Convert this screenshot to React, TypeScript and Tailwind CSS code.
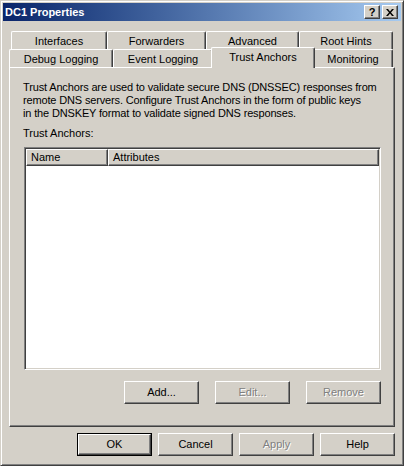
const font = "font-['Liberation_Sans',Arial,sans-serif]";

function Tab({ label, w, selected }: { label: string; w: string; selected?: boolean }) {
  if (selected) {
    return (
      <div
        className={`${w} relative z-10 -mx-[2px] -mt-[2px] h-[21px] -mb-px flex items-start justify-center pt-[3px] border-t border-l border-white border-r border-r-[#404040] rounded-tl-[2px] rounded-tr-[2px] bg-[#d4d0c8] shadow-[inset_-1px_0_#808080]`}
      >
        {label}
      </div>
    );
  }
  return (
    <div
      className={`${w} h-[18px] flex items-center justify-center pt-[2px] border-t border-l border-white border-r border-r-[#404040] rounded-tl-[2px] rounded-tr-[2px] bg-[#d4d0c8] shadow-[inset_-1px_0_#808080]`}
    >
      {label}
    </div>
  );
}

function Btn({ label, disabled, isDefault }: { label: string; disabled?: boolean; isDefault?: boolean }) {
  const face = (
    <div
      className={`flex-1 flex items-center justify-center border-t border-l border-white border-r border-b border-r-[#404040] border-b-[#404040] shadow-[inset_-1px_-1px_#808080] ${
        disabled ? "text-[#808080] [text-shadow:1px_1px_0_#fff]" : "text-black"
      }`}
    >
      {label}
    </div>
  );
  if (isDefault) {
    return <div className="w-[75px] h-[23px] flex border border-black">{face}</div>;
  }
  return <div className="w-[75px] h-[23px] flex">{face}</div>;
}

export default function App() {
  return (
    <div
      className={`${font} w-[404px] h-[466px] flex flex-col p-[2px] bg-[#d4d0c8] text-[11px] leading-[13px] text-black border border-t-[#d4d0c8] border-l-[#d4d0c8] border-r-[#404040] border-b-[#404040] shadow-[inset_1px_1px_#fff,inset_-1px_-1px_#808080]`}
    >
      {/* title bar */}
      <div className="h-[18px] flex items-center justify-between bg-gradient-to-r from-[#0a246a] to-[#a6caf0] pl-[2px] pr-[3px]">
        <span className="text-white font-bold text-[11px]">DC1 Properties</span>
        <div className="flex gap-[2px]">
          <div className="w-[16px] h-[14px] flex items-center justify-center bg-[#d4d0c8] border-t border-l border-white border-r border-b border-r-[#404040] border-b-[#404040] shadow-[inset_-1px_-1px_#808080] font-bold text-[11px] leading-none">
            ?
          </div>
          <div className="w-[16px] h-[14px] flex items-center justify-center bg-[#d4d0c8] border-t border-l border-white border-r border-b border-r-[#404040] border-b-[#404040] shadow-[inset_-1px_-1px_#808080]">
            <svg width="8" height="7" viewBox="0 0 8 7">
              <path d="M0 0h2l2 2.5L6 0h2L5 3.5 8 7H6L4 4.5 2 7H0l3-3.5z" fill="#000" />
            </svg>
          </div>
        </div>
      </div>

      <div className="flex flex-col px-[6px] pt-[10px]">
        {/* tabs */}
        <div className="flex pl-[2px]">
          <Tab label="Interfaces" w="w-[96px]" />
          <Tab label="Forwarders" w="w-[99px]" />
          <Tab label="Advanced" w="w-[93px]" />
          <Tab label="Root Hints" w="w-[94px]" />
        </div>
        <div className="flex items-end">
          <Tab label="Debug Logging" w="w-[104px]" />
          <Tab label="Event Logging" w="w-[100px]" />
          <Tab label="Trust Anchors" w="w-[104px]" selected />
          <Tab label="Monitoring" w="w-[80px]" />
        </div>

        {/* panel */}
        <div className="w-[386px] h-[360px] flex flex-col px-[13px] pt-[13px] border-t border-l border-white border-r border-b border-r-[#404040] border-b-[#404040] shadow-[inset_-1px_-1px_#808080]">
          <p className="whitespace-nowrap tracking-[-0.15px]">
            Trust Anchors are used to validate secure DNS (DNSSEC) responses from
            <br />
            remote DNS servers. Configure Trust Anchors in the form of public keys
            <br />
            in the DNSKEY format to validate signed DNS responses.
          </p>
          <p className="mt-[7px]">Trust Anchors:</p>

          <div className="ml-px mt-[7px] w-[357px] h-[223px] flex flex-col bg-white border-t border-l border-[#808080] border-r border-b border-r-white border-b-white shadow-[inset_1px_1px_#404040,inset_-1px_-1px_#d4d0c8] p-px">
            <div className="flex h-[17px]">
              <div className="w-[82px] flex items-center pl-[4px] bg-[#d4d0c8] border-t border-l border-white border-r border-b border-r-[#404040] border-b-[#404040] shadow-[inset_-1px_-1px_#808080]">
                Name
              </div>
              <div className="flex-1 flex items-center pl-[4px] bg-[#d4d0c8] border-t border-l border-white border-r border-b border-r-[#404040] border-b-[#404040] shadow-[inset_-1px_-1px_#808080]">
                Attributes
              </div>
            </div>
          </div>

          <div className="ml-px mt-[11px] w-[357px] flex justify-end gap-[16px]">
            <Btn label="Add..." />
            <Btn label="Edit..." disabled />
            <Btn label="Remove" disabled />
          </div>
        </div>

        {/* dialog buttons */}
        <div className="mt-[6px] flex justify-end gap-[6px]">
          <Btn label="OK" isDefault />
          <Btn label="Cancel" />
          <Btn label="Apply" disabled />
          <Btn label="Help" />
        </div>
      </div>
    </div>
  );
}
